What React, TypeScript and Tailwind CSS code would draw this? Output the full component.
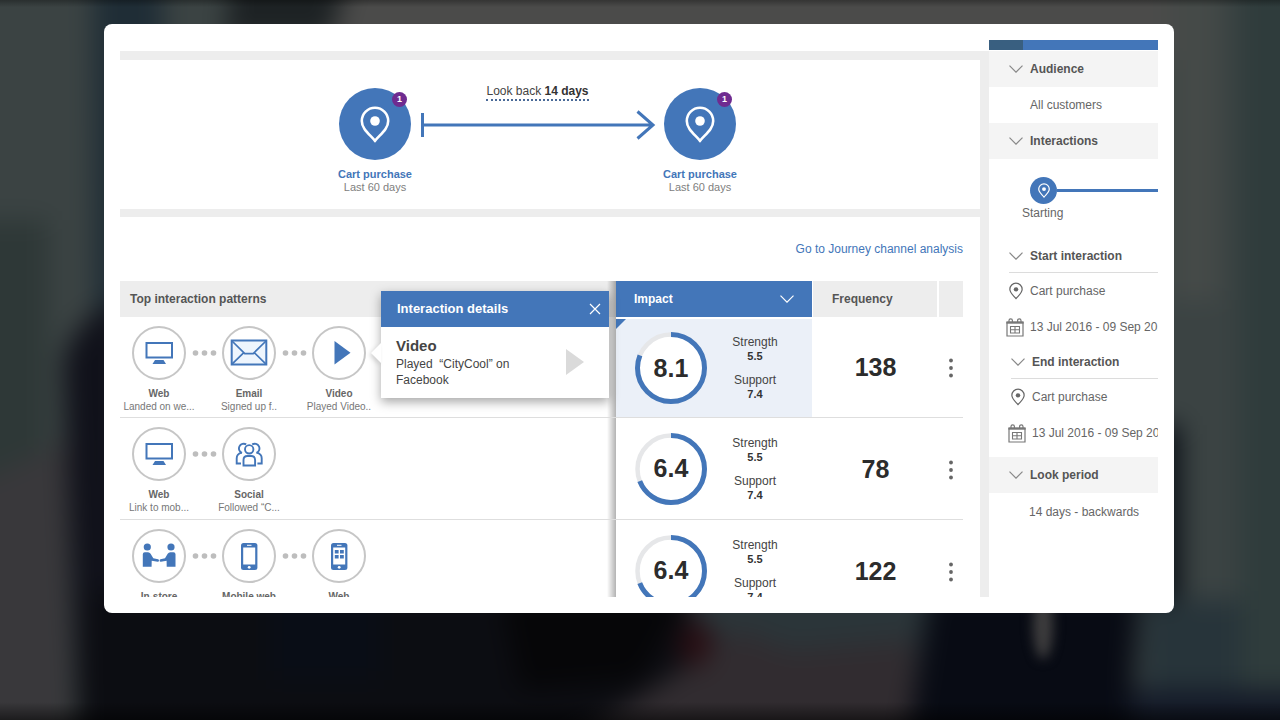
import type { ReactNode } from "react";

type IconName = "monitor" | "mail" | "play" | "people" | "handshake" | "phone" | "app";

interface Step {
  icon: IconName;
  title: string;
  note?: string;
}

interface Pattern {
  score: string;
  share: number;
  strength: string;
  support: string;
  frequency: number;
  steps: Step[];
}

const patterns: Pattern[] = [
  {
    score: "8.1",
    share: 0.81,
    strength: "5.5",
    support: "7.4",
    frequency: 138,
    steps: [
      { icon: "monitor", title: "Web", note: "Landed on we..." },
      { icon: "mail", title: "Email", note: "Signed up f.." },
      { icon: "play", title: "Video", note: "Played Video.." },
    ],
  },
  {
    score: "6.4",
    share: 0.69,
    strength: "5.5",
    support: "7.4",
    frequency: 78,
    steps: [
      { icon: "monitor", title: "Web", note: "Link to mob..." },
      { icon: "people", title: "Social", note: "Followed “C..." },
    ],
  },
  {
    score: "6.4",
    share: 0.69,
    strength: "5.5",
    support: "7.4",
    frequency: 122,
    steps: [
      { icon: "handshake", title: "In-store" },
      { icon: "phone", title: "Mobile web" },
      { icon: "app", title: "Web" },
    ],
  },
];

const glyphs: Record<IconName, ReactNode> = {
  monitor: (
    <>
      <rect x="14.5" y="17" width="25.5" height="14.5" fill="none" stroke="#4376b9" strokeWidth="2" />
      <path d="M23 34h8.500l2.500 4H20.500z" fill="#4376b9" />
    </>
  ),
  mail: (
    <g fill="none" stroke="#4376b9">
      <rect x="9.700" y="14.500" width="34.600" height="24" fill="#eef5fd" strokeWidth="2" />
      <path d="M10 15l12.800 12.600h8.400L44 15M10 38.200l11.800-11.600M44 38.200L32.200 26.600" strokeWidth="1.700" />
    </g>
  ),
  play: <path d="M22.500 15v23.500L38.500 26.800z" fill="#4376b9" />,
  people: (
    <g fill="none" stroke="#4376b9" strokeWidth="1.900">
      <circle cx="27.200" cy="22.300" r="4.200" />
      <path d="M21.500 38.500v-5.500q0-4 4-4h3.600q4 0 4 4v5.500z" />
      <path d="M20 26a4.800 4.800 0 1 1 4.200-8.600M34.400 26a4.800 4.800 0 1 0-4.200-8.600" />
      <path d="M19 36.500h-4.300v-5.300q0-4.200 4.800-5.600M35.400 36.500h4.300v-5.300q0-4.200-4.800-5.600" />
    </g>
  ),
  handshake: (
    <g fill="#4376b9">
      <circle cx="15.300" cy="18" r="3.600" />
      <circle cx="39" cy="18" r="3.600" />
      <path d="M10.800 37.700V25.200q0-2 2-2h3.200q1.700 0 2.600 1.600l2.700 4.400 4.800 1q1 .4.900 1.500t-1.300 1l-6-.9-.1 5.900z" />
      <path d="M43.500 37.700V25.200q0-2-2-2h-3.200q-1.700 0-2.600 1.600l-2.700 4.400-4.500 1q-1 .4-.9 1.500t1.300 1l5.700-.9.100 5.900z" />
    </g>
  ),
  phone: (
    <>
      <rect x="19" y="14" width="16.400" height="27" rx="2.500" fill="#4376b9" />
      <rect x="21.200" y="18.500" width="12" height="17" fill="#fff" />
      <rect x="25" y="15.800" width="4.500" height="1" fill="#fff" />
      <circle cx="27.200" cy="38.300" r="1.400" fill="#fff" />
    </>
  ),
  app: (
    <>
      <rect x="19" y="14" width="16.400" height="27" rx="2.500" fill="#4376b9" />
      <rect x="21.200" y="18.500" width="12" height="17" fill="#fff" />
      <rect x="25" y="15.800" width="4.500" height="1" fill="#fff" />
      <circle cx="27.200" cy="38.300" r="1.400" fill="#fff" />
      <path d="M22.800 21h3.800v3.600h-3.800zM28 21h3.800v3.600H28zM22.800 26h3.800v3.600h-3.800zM28 26h3.800v3.600H28z" fill="#4376b9" />
    </>
  ),
};

function StepIcon({ name }: { name: IconName }) {
  return (
    <svg viewBox="0 0 54 54" className="size-[54px] shrink-0" aria-hidden="true">
      <circle cx="27" cy="27" r="26" fill="#fff" stroke="#c6c6c6" strokeWidth="2" />
      {glyphs[name]}
    </svg>
  );
}

function Pin({ className, weight }: { className: string; weight: number }) {
  return (
    <svg viewBox="0 0 30 37" className={className} fill="none" stroke="currentColor" aria-hidden="true">
      <path
        d="M15 34.800C9.500 28.200 1.800 23 1.800 15a13.200 13.200 0 0 1 26.400 0C28.200 23 20.500 28.200 15 34.800Z"
        strokeWidth={weight}
      />
      <circle cx="15" cy="15" r="4.800" fill="currentColor" stroke="none" />
    </svg>
  );
}

function Chevron({ className }: { className: string }) {
  return (
    <svg viewBox="0 0 14 8" className={className} fill="none" stroke="currentColor" strokeWidth="1.200" aria-hidden="true">
      <path d="M.5.700 7 7.200 13.500.700" />
    </svg>
  );
}

function Calendar() {
  return (
    <svg viewBox="0 0 18 19" className="h-[19px] w-[18px]" fill="none" stroke="#777" aria-hidden="true">
      <path d="M1 4v14h16V4" strokeWidth="1.200" />
      <path d="M.4 4.500h17.200" strokeWidth="2.400" />
      <path d="M3 4V2.500a1.700 1.700 0 0 1 3.400 0V4M11.600 4V2.500a1.700 1.700 0 0 1 3.400 0V4" strokeWidth="1.200" />
      <path d="M4.500 8.500h9v6.500h-9zM9 8.500V15M4.500 11.700h9" strokeWidth="1.100" />
    </svg>
  );
}

function Backdrop() {
  return (
    <svg
      viewBox="0 0 1280 720"
      preserveAspectRatio="xMidYMid slice"
      className="absolute inset-0 -z-10 size-full"
      aria-hidden="true"
    >
      <defs>
        <filter
          id="soft"
          filterUnits="userSpaceOnUse"
          x="-80"
          y="-80"
          width="1440"
          height="880"
          colorInterpolationFilters="sRGB"
        >
          <feGaussianBlur stdDeviation="13" />
        </filter>
        <filter
          id="glint"
          filterUnits="userSpaceOnUse"
          x="980"
          y="560"
          width="130"
          height="160"
          colorInterpolationFilters="sRGB"
        >
          <feGaussianBlur stdDeviation="6" />
        </filter>
        <linearGradient id="edge" x1="0" y1="0" x2="0" y2="1">
          <stop offset="0" stopColor="#000" stopOpacity="0.300" />
          <stop offset="0.010" stopColor="#000" stopOpacity="0" />
          <stop offset="0.975" stopColor="#000" stopOpacity="0" />
          <stop offset="1" stopColor="#000" stopOpacity="0.500" />
        </linearGradient>
      </defs>
      <g filter="url(#soft)">
        <rect x="-80" y="-80" width="1440" height="880" fill="#3b4343" />
        <path d="M235 -60H1200V60H235z" fill="#4b4b4a" />
        <path d="M93 -60h70V320H95z" fill="#1f2d36" />
        <path d="M235 -60h125l-30 100H225z" fill="#1d2224" />
        <path d="M-60 220H48V480H-60z" fill="#2e3837" />
        <path d="M1170 -20h50V300h-50z" fill="#454a48" />
        <path d="M1240 -60h100V760H1240z" fill="#2f3c3c" />
        <path d="M64 360Q80 310 125 300V790H80L70 520z" fill="#10111a" />
        <path d="M-60 500L68 440V790H-60z" fill="#39383b" />
        <path d="M85 590H720V640L650 700 540 790H72z" fill="#0c0d12" />
        <path d="M270 590H380V680H270z" fill="#090d16" />
        <path d="M500 590H690L640 680 520 690z" fill="#060608" />
        <path d="M690 590H930V760H700z" fill="#2b3539" />
        <path d="M500 790L740 630 790 650 915 640V790z" fill="#312c30" />
        <path d="M690 615l28 20-18 35-24-20z" fill="#2a0e13" />
        <path d="M930 590H1140L1125 790H900z" fill="#080b14" />
        <path d="M1150 425h30V600h-30z" fill="#0a0f16" />
        <path d="M1145 600h95V690h-95z" fill="#27343a" />
        <path d="M1130 690h200v90h-200z" fill="#141a28" />
      </g>
      <ellipse cx="1043" cy="625" rx="10" ry="34" fill="#3e3d3e" filter="url(#glint)" />
      <rect width="1280" height="720" fill="url(#edge)" />
    </svg>
  );
}

function JourneyNode() {
  return (
    <div className="flex w-[72px] flex-col items-center pt-[5px] whitespace-nowrap">
      <div className="relative flex size-[72px] justify-center rounded-full bg-[#4376b9] pt-[18px] text-white">
        <Pin className="h-[37px] w-[30px]" weight={2.6} />
        <span className="absolute top-[4px] right-[4px] flex size-[15px] items-center justify-center rounded-full bg-[#6f2b90] text-[9px] font-bold">
          1
        </span>
      </div>
      <strong className="mt-[7px] text-[11px] leading-[14px] text-[#4376b9]">Cart purchase</strong>
      <span className="text-[11px] leading-[13px] text-[#808080]">Last 60 days</span>
    </div>
  );
}

function Journey() {
  return (
    <section className="flex h-[157px] justify-center border-b-8 border-[#ededed] pt-[23px] pr-[25px]">
      <JourneyNode />
      <div className="flex w-[253px] flex-col items-center">
        <button type="button" className="border-b-2 border-dotted border-[#4a6a98] text-[12px] leading-[16px] text-[#444]">
          Look back <strong className="text-[#333]">14 days</strong>
        </button>
        <svg viewBox="0 0 236 30" className="mt-[9px] h-[30px] w-[236px]" fill="none" stroke="#4376b9" strokeWidth="3" aria-hidden="true">
          <path d="M2.500 3v24M2.500 15H232M217.500 1.500 233 15 217.500 28.500" />
        </svg>
      </div>
      <JourneyNode />
    </section>
  );
}

function Details() {
  return (
    <div
      role="dialog"
      aria-label="Interaction details"
      className="absolute top-[-26px] left-[261px] z-10 w-[228px] bg-white shadow-[0_4px_10px_rgba(0,0,0,0.35)]"
    >
      <svg viewBox="0 0 10 20" className="absolute top-[52px] left-[-10px] h-5 w-2.5 drop-shadow-[-2px_2px_2px_rgba(0,0,0,0.15)]" aria-hidden="true">
        <path d="M10 0 0 10l10 10z" fill="#fff" />
      </svg>
      <header className="flex h-9 items-center justify-between bg-[#4376b9] pr-2 pl-4 text-white">
        <h3 className="text-[13px] font-bold">Interaction details</h3>
        <button type="button" aria-label="Close" className="flex">
          <svg viewBox="0 0 12 12" className="size-3" fill="none" stroke="currentColor" strokeWidth="1.200" aria-hidden="true">
            <path d="M1 1l10 10M11 1 1 11" />
          </svg>
        </button>
      </header>
      <div className="flex h-[71px] items-center justify-between pr-[25px] pb-0.5 pl-[15px] text-[#444]">
        <div>
          <h4 className="text-[15px] leading-[20px] font-bold">Video</h4>
          <p className="text-[12px] leading-[16px]">
            Played&nbsp; “CityCool” on
            <br />
            Facebook
          </p>
        </div>
        <svg viewBox="0 0 18 26" className="h-[26px] w-[18px]" aria-hidden="true">
          <path d="M0 0v26l18-13z" fill="#dadada" />
        </svg>
      </div>
    </div>
  );
}

function Steps({ steps }: { steps: Step[] }) {
  return (
    <ol className="flex pt-[9px] pl-3">
      {steps.map((step, i) => (
        <li key={step.title + i} className="w-[90px]">
          <div className="flex items-center">
            <StepIcon name={step.icon} />
            {i < steps.length - 1 && (
              <svg viewBox="0 0 36 6" className="h-1.5 w-9" fill="#bdbdbd" aria-hidden="true">
                <circle cx="9.500" cy="3" r="2.800" />
                <circle cx="18.500" cy="3" r="2.800" />
                <circle cx="27.500" cy="3" r="2.800" />
              </svg>
            )}
          </div>
          <div className="-ml-3 w-[78px] pt-[7px] text-center text-[10px] leading-[13px] whitespace-nowrap text-[#777]">
            <strong className="block text-[#666]">{step.title}</strong>
            {step.note}
          </div>
        </li>
      ))}
    </ol>
  );
}

function Score({ value, share }: { value: string; share: number }) {
  const length = 2 * Math.PI * 33.5;
  return (
    <div className="grid size-[72px] place-items-center">
      <svg viewBox="0 0 72 72" className="col-start-1 row-start-1 size-[72px]" aria-hidden="true">
        <circle cx="36" cy="36" r="33.500" fill="#fff" stroke="#e6e7e9" strokeWidth="4.500" />
        <circle
          cx="36"
          cy="36"
          r="33.500"
          fill="none"
          stroke="#4376b9"
          strokeWidth="5"
          strokeDasharray={`${length * share} ${length}`}
          transform="rotate(-90 36 36)"
        />
      </svg>
      <strong className="col-start-1 row-start-1 text-[25px] leading-none text-[#2c2c2c]">{value}</strong>
    </div>
  );
}

function EdgeShade() {
  return <span className="absolute inset-y-0 right-0 w-[9px] bg-linear-to-r from-transparent to-black/30" />;
}

function PatternTable() {
  return (
    <table className="w-full table-fixed border-separate border-spacing-0 text-[12px]">
      <colgroup>
        <col />
        <col className="w-[196px]" />
        <col className="w-[125px]" />
        <col className="w-[26px]" />
      </colgroup>
      <thead>
        <tr className="h-9 text-left text-[#555]">
          <th scope="col" className="relative bg-[#ededed] pl-[10px]">
            Top interaction patterns
            <EdgeShade />
          </th>
          <th scope="col" className="bg-[#4376b9] pr-[18px] pl-[18px] text-white">
            <button type="button" className="flex w-full items-center justify-between font-bold">
              Impact
              <Chevron className="h-2 w-3.5" />
            </button>
          </th>
          <th scope="col" className="border-l border-white bg-[#ededed] pl-[19px]">
            Frequency
          </th>
          <th scope="col" aria-label="Actions" className="border-l-2 border-white bg-[#ededed]" />
        </tr>
      </thead>
      <tbody>
        {patterns.map((row, i) => (
          <tr key={row.frequency} className={i === 0 ? "h-[101px]" : "h-[102px]"}>
            <td className="relative border-b border-[#dedede] p-0 align-top">
              <Steps steps={row.steps} />
              <EdgeShade />
              {i === 0 && <Details />}
            </td>
            <td
              className={
                i === 0
                  ? "relative border-t-2 border-b border-t-white border-b-[#dedede] bg-[#ebf0f8] p-0"
                  : "relative border-b border-[#dedede] p-0"
              }
            >
              {i === 0 && (
                <svg viewBox="0 0 10 10" className="absolute top-0 left-0 size-2.5" aria-hidden="true">
                  <path d="M0 0h10L0 10z" fill="#4376b9" />
                </svg>
              )}
              <div className="flex items-center gap-3 pl-[19px]">
                <Score value={row.score} share={row.share} />
                <dl className="w-[72px] text-center leading-[14px] text-[#444]">
                  <dt>Strength</dt>
                  <dd className="text-[11px] font-bold text-[#333]">{row.strength}</dd>
                  <dt className="mt-[10px]">Support</dt>
                  <dd className="text-[11px] font-bold text-[#333]">{row.support}</dd>
                </dl>
              </div>
            </td>
            <td className="border-b border-[#dedede] pt-0.5 pr-0 pb-0 pl-0.5 text-center text-[25px] font-bold text-[#2c2c2c]">
              {row.frequency}
            </td>
            <td className="border-b border-[#dedede] pt-0.5 pr-0 pb-0 pl-0.5">
              <button type="button" aria-label="Row actions" className="mx-auto flex">
                <svg viewBox="0 0 4 20" className="h-5 w-1" fill="#666" aria-hidden="true">
                  <circle cx="2" cy="2.500" r="1.900" />
                  <circle cx="2" cy="10" r="1.900" />
                  <circle cx="2" cy="17.500" r="1.900" />
                </svg>
              </button>
            </td>
          </tr>
        ))}
      </tbody>
    </table>
  );
}

function BandHeading({ children }: { children: string }) {
  return (
    <button type="button" className="flex h-9 w-full items-center gap-[7px] bg-[#f4f4f4] pl-5 font-bold text-[#555]">
      <Chevron className="h-2 w-3.5 text-[#888]" />
      {children}
    </button>
  );
}

function Interaction({ title }: { title: string }) {
  return (
    <section>
      <button
        type="button"
        className="ml-5 flex h-[34px] w-full items-center gap-[7px] border-b border-[#dcdcdc] font-bold text-[#555]"
      >
        <Chevron className="h-2 w-3.5 text-[#888]" />
        {title}
      </button>
      <p className="flex h-9 items-center gap-[7px] pl-5">
        <Pin className="h-[18px] w-3.5 text-[#666]" weight={2.6} />
        Cart purchase
      </p>
      <p className="flex h-9 items-center gap-[6px] pl-[17px] whitespace-nowrap">
        <span className="shrink-0">
          <Calendar />
        </span>
        13 Jul 2016 - 09 Sep 2016
      </p>
    </section>
  );
}

function Sidebar() {
  return (
    <aside className="w-[169px] shrink-0 overflow-hidden text-[12px] text-[#666]">
      <div className="flex h-[11px] border-b border-white">
        <div className="w-[34px] bg-[#395f80]" />
        <div className="flex-1 bg-[#4376b9]" />
      </div>
      <BandHeading>Audience</BandHeading>
      <p className="flex h-9 items-center pl-[41px]">All customers</p>
      <BandHeading>Interactions</BandHeading>
      <div className="h-20 pt-[18px]">
        <div className="flex items-center pl-[41px]">
          <span className="flex size-[27px] items-center justify-center rounded-full bg-[#4376b9] text-white">
            <Pin className="h-[15px] w-3" weight={3} />
          </span>
          <span className="h-[3px] flex-1 bg-[#4376b9]" />
        </div>
        <p className="pl-[33px] leading-[18px]">Starting</p>
      </div>
      <Interaction title="Start interaction" />
      <div className="pb-1.5 pl-0.5">
        <Interaction title="End interaction" />
      </div>
      <BandHeading>Look period</BandHeading>
      <p className="flex h-[38px] items-center pl-10">14 days - backwards</p>
    </aside>
  );
}

export default function App() {
  return (
    <div className="relative isolate flex h-screen flex-col overflow-hidden bg-[#22282a] pt-6 pr-[106px] pb-[107px] pl-[104px] font-['Liberation_Sans',Arial,sans-serif]">
      <Backdrop />
      <div className="flex min-h-0 flex-1 rounded-lg bg-white p-4">
        <div className="flex min-h-0 flex-1 overflow-hidden">
          <main className="flex min-w-0 flex-1 flex-col pt-[11px]">
            <div className="flex-1 border-t-[9px] border-r-[9px] border-[#ededed]">
              <Journey />
              <section className="pr-[17px]">
                <div className="flex h-16 items-center justify-end">
                  <a href="#channels" className="text-[12px] text-[#4376b9]">
                    Go to Journey channel analysis
                  </a>
                </div>
                <PatternTable />
              </section>
            </div>
          </main>
          <Sidebar />
        </div>
      </div>
    </div>
  );
}
